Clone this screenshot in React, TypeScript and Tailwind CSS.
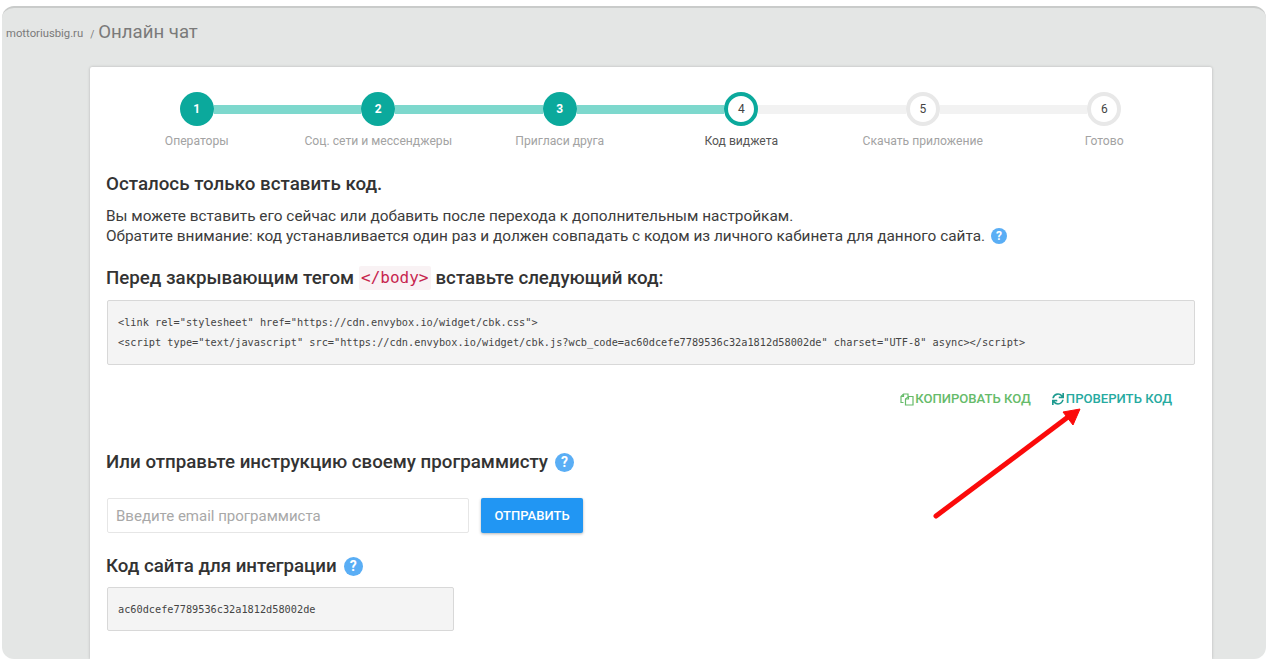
import { FaSync } from "react-icons/fa";

const STEPS = [
  { n: 1, label: "Операторы", state: "done" },
  { n: 2, label: "Соц. сети и мессенджеры", state: "done" },
  { n: 3, label: "Пригласи друга", state: "done" },
  { n: 4, label: "Код виджета", state: "current" },
  { n: 5, label: "Скачать приложение", state: "todo" },
  { n: 6, label: "Готово", state: "todo" },
];

const SITE_CODE = "ac60dcefe7789536c32a1812d58002de";

function Help({ small }: { small?: boolean }) {
  return (
    <span
      className={
        small
          ? "inline-flex w-[16px] h-[16px] rounded-full bg-[#5aaef5] text-white text-[12px] leading-none font-bold items-center justify-center align-top mt-[2px] ml-[2px]"
          : "inline-flex w-[19px] h-[19px] rounded-full bg-[#5aaef5] text-white text-[14px] font-bold items-center justify-center"
      }
    >
      ?
    </span>
  );
}

function CopyIcon() {
  return (
    <svg viewBox="0 0 14 14" className="w-[14px] h-[14px] mr-[1px]" fill="none" stroke="currentColor" strokeWidth="1.2">
      <path d="M3.5 10.5H1V4.5L3.5 2H8V4.5" />
      <path d="M3.5 2V4.5H1" />
      <path d="M8.5 4.5H13V13H5.5V7L8.5 4.5Z" />
      <path d="M8.5 4.5V7H5.5" />
    </svg>
  );
}

function Stepper() {
  return (
    <div className="grid grid-cols-6">
      {STEPS.map((step, i) => {
        const leftColor = i === 0 ? "bg-transparent" : step.state === "todo" ? "bg-[#f2f2f2]" : "bg-[#7dd8cd]";
        const next = STEPS[i + 1];
        const rightColor = !next ? "bg-transparent" : next.state === "todo" ? "bg-[#f2f2f2]" : "bg-[#7dd8cd]";
        return (
          <div key={step.n} className="flex flex-col items-center">
            <div className="flex items-center w-full">
              <div className={`flex-1 h-[9px] ${leftColor}`} />
              {step.state === "done" && (
                <div className="w-[34px] h-[34px] rounded-full bg-[#0ba99c] text-white text-[12px] font-bold flex items-center justify-center">
                  {step.n}
                </div>
              )}
              {step.state === "current" && (
                <div className="w-[34px] h-[34px] rounded-full bg-white border-4 border-[#0ba99c] text-[#444] text-[12px] flex items-center justify-center">
                  {step.n}
                </div>
              )}
              {step.state === "todo" && (
                <div className="w-[34px] h-[34px] rounded-full bg-white border-4 border-[#e8e8e8] text-[#444] text-[12px] flex items-center justify-center">
                  {step.n}
                </div>
              )}
              <div className={`flex-1 h-[9px] ${rightColor}`} />
            </div>
            <div
              className={`mt-[7px] text-[12.15px] leading-[16px] ${
                step.state === "current" ? "text-[#555]" : "text-[#a3a3a3]"
              }`}
            >
              {step.label}
            </div>
          </div>
        );
      })}
    </div>
  );
}

export default function App() {
  return (
    <div className="relative w-[1268px] h-[662px] overflow-hidden bg-white font-['Roboto',sans-serif] pt-[6px] px-[2px] pb-[3px]">
      <div className="h-full rounded-[12px] bg-[#e4e6e5] border-t-2 border-[#c9cbca] flex flex-col overflow-hidden">
        <div className="h-[59px] shrink-0 flex items-start pt-[12px] pl-[4px] text-[#7a7a7a]">
          <span className="text-[11.3px] leading-[24px] mt-[2px]">mottoriusbig.ru</span>
          <span className="text-[10px] leading-[24px] mt-[3px] ml-[7px] mr-[4px]">/</span>
          <span className="text-[18.6px] leading-[24px]">Онлайн чат</span>
        </div>
        <div className="ml-[88px] w-[1122px] flex-1 bg-white rounded-t-[2px] shadow-[0_0_3px_rgba(0,0,0,0.22)] pt-[25px] pl-[17px] pr-[17px] text-[#333]">
          <div className="-ml-[1px]">
            <Stepper />
          </div>

          <h2 className="mt-[23px] -ml-[1px] text-[18.75px] leading-[24px] font-medium text-[#333]">
            Осталось только вставить код.
          </h2>
          <p className="mt-[10px] -ml-[1px] text-[15.37px] leading-[20px] text-[#3c3c3c]">
            Вы можете вставить его сейчас или добавить после перехода к дополнительным настройкам.
            <br />
            Обратите внимание: код устанавливается один раз и должен совпадать с кодом из личного кабинета для данного сайта. <Help small />
          </p>

          <h2 className="mt-[19px] -ml-[1px] text-[18.72px] leading-[26px] font-medium text-[#333] flex items-center">
            Перед закрывающим тегом
            <code className="mx-[5px] px-[2px] rounded-[2px] bg-[#f9f2f4] text-[#c7254e] text-[16px] leading-[24px] font-['DejaVu_Sans_Mono',monospace] font-normal">
              {"</body>"}
            </code>
            вставьте следующий код:
          </h2>
          <pre className="mt-[9px] h-[65px] bg-[#f4f4f4] border border-[#d8d8d8] rounded-[2px] pt-[11px] px-[10px] text-[10.25px] leading-[20px] text-[#444] font-['DejaVu_Sans_Mono',monospace]">
            {`<link rel="stylesheet" href="https://cdn.envybox.io/widget/cbk.css">\n<script type="text/javascript" src="https://cdn.envybox.io/widget/cbk.js?wcb_code=${SITE_CODE}" charset="UTF-8" async></script>`}
          </pre>

          <div className="mt-[25px] flex justify-end pr-[23px] text-[13.1px] leading-[18px] font-medium">
            <span className="flex items-center text-[#66bb6a]">
              <CopyIcon />
              КОПИРОВАТЬ КОД
            </span>
            <span className="flex items-center text-[#26aaa0] ml-[21px]">
              <FaSync className="w-[12px] h-[12px] mr-[2px] text-[#1d9a8f]" />
              ПРОВЕРИТЬ КОД
            </span>
          </div>

          <h2 className="mt-[41px] -ml-[1px] text-[18.72px] leading-[26px] font-medium text-[#333] flex items-center gap-[7px]">
            Или отправьте инструкцию своему программисту <Help />
          </h2>
          <div className="mt-[23px] flex gap-[12px]">
            <input
              readOnly
              placeholder="Введите email программиста"
              className="w-[362px] h-[35px] border border-[#e6e6e6] rounded-[2px] px-[8px] text-[15px] outline-none placeholder:text-[#a8a8a8]"
            />
            <button className="w-[102px] h-[35px] rounded-[2px] bg-[#2196f3] text-white text-[13px] font-medium shadow-[0_1px_3px_rgba(0,0,0,0.3)]">
              ОТПРАВИТЬ
            </button>
          </div>

          <h2 className="mt-[20px] -ml-[1px] text-[18.72px] leading-[26px] font-medium text-[#333] flex items-center gap-[7px]">
            Код сайта для интеграции <Help />
          </h2>
          <pre className="mt-[8px] w-[347px] h-[44px] bg-[#f4f4f4] border border-[#d8d8d8] rounded-[2px] px-[10px] text-[10.25px] leading-[42px] text-[#444] font-['DejaVu_Sans_Mono',monospace]">
            {SITE_CODE}
          </pre>
        </div>
      </div>

      {/* annotation arrow */}
      <svg className="absolute left-0 top-0 pointer-events-none" width="1268" height="662" viewBox="0 0 1268 662">
        <path d="M936 516 L1068 417" stroke="#fb0a0a" strokeWidth="5" strokeLinecap="round" fill="none" />
        <path d="M1080 409 L1063 412 L1073 425 Z" fill="#fb0a0a" stroke="#fb0a0a" strokeWidth="1" strokeLinejoin="round" />
      </svg>
    </div>
  );
}
